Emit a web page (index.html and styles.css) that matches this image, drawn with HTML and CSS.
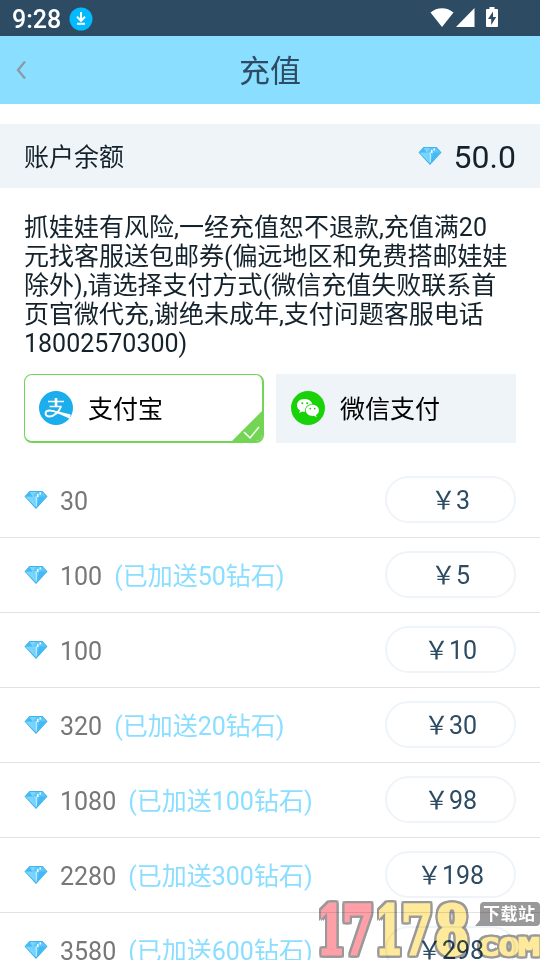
FILE: index.html
```
<!DOCTYPE html>
<html lang="zh-CN">
<head>
<meta charset="utf-8">
<title>充值</title>
<link rel="stylesheet" href="styles.css">
</head>
<body>
<svg class="defs" width="0" height="0">
  <symbol id="gem" viewBox="0 0 24 20">
    <path fill="#36aee8" d="M5.5 1h13L23.5 6.500 12 19 .5 6.500z"/>
    <path fill="#5cc8fa" d="M5.800 1.800h12.400L22.500 6.500 12 17.800 1.500 6.500z"/>
    <path fill="#7cd5fd" d="M5.500 2 8.500 6.500 12 2zM1.500 6.500h7L12 17z"/>
    <path fill="#45b9f4" d="M15.500 6.500h7L12 17.500zM1.500 6.500 5.500 2l3 4.500z"/>
    <path fill="#74d2fd" d="M8.500 6.500h3.500V17.500z"/>
    <path fill="#b4eaff" d="M11.500 6.500H13V15l-1 2.500z"/>
    <path fill="#fff" d="M13 4h1.500v3H13zM15.500 2.500H17v2h-1.500z"/>
  </symbol>
</svg>
<div class="screen">
  <div class="status">
    <span class="time">9:28</span>
    <svg class="download" width="24" height="24" viewBox="0 0 24 24"><circle cx="12" cy="12" r="11.500" fill="#04baff"/><path d="M12 5v8.500M8 9.800l4 4 4-4M8 16.700h8" fill="none" stroke="#fff" stroke-width="2"/></svg>
    <svg class="signals" width="70" height="22" viewBox="0 0 70 22"><path fill="#fff" d="M.5 5.500C7-.2 17-.2 23.500 5.500L12 20zM44.500 1v19H26zM57 2h2.500V0h5v2H67q1 0 1 1v16q0 1-1 1H57q-1 0-1-1V3q0-1 1-1z"/><path fill="#2d4c63" d="M63 4.500 58 12h3.200v6l5-8H63z"/></svg>
  </div>
  <header class="header">
    <svg class="back" width="10" height="20" viewBox="0 0 10 20"><path d="M9 1.500 2 10l7 8.500" fill="none" stroke="#8b9ba6" stroke-width="2.300"/></svg>
    <h1>充值</h1>
  </header>
  <section class="balance">
    <span>账户余额</span>
    <svg class="gem"><use href="#gem"/></svg>
    <b>50.0</b>
  </section>
  <p class="notice">抓娃娃有风险,一经充值恕不退款,充值满20<br>元找客服送包邮券(偏远地区和免费搭邮娃娃<br>除外),请选择支付方式(微信充值失败联系首<br>页官微代充,谢绝未成年,支付问题客服电话<br>18002570300)</p>
  <div class="methods">
    <div class="method selected">
      <svg width="34" height="34" viewBox="0 0 34 34"><circle cx="17" cy="17" r="17" fill="#1cadec"/><path d="M9 10.500h16M10.500 15.500h12" fill="none" stroke="#fff" stroke-width="1.500"/><path d="M17 7v8" stroke="#fff" stroke-width="2.600"/><path d="M22 15.500C20 21 15 25.500 10.500 25.500c-5.500 0-5-6 0-6 3 0 6 1 9 2.500" fill="none" stroke="#fff" stroke-width="1.900"/><path d="M17.500 20 31.800 23.500 30.500 27.500 18 22z" fill="#fff"/></svg>
      <span>支付宝</span>
      <svg class="check" width="32" height="32" viewBox="0 0 32 32"><path d="M32 0v32H0z" fill="#72d553"/><path d="m13 22 6 6 9-11" fill="none" stroke="#fff" stroke-width="1.500"/></svg>
    </div>
    <div class="method wechat">
      <svg width="34" height="34" viewBox="0 0 34 34"><circle cx="17" cy="17" r="17" fill="#1ad20a"/><path fill="#fff" d="M13.500 8C8.500 8 6 11 6 14.200c0 2.300 1.200 4 3 5.100L8.200 22l3-1.600c1 .3 2 .4 3 .3-.8-5 3.300-7.800 7-7.700C20.300 9.700 17.300 8 13.500 8z"/><path fill="#fff" d="M21.500 13.800c-4 0-6.700 2.600-6.700 5.600 0 3.200 3.500 6 8.200 5.400l2.700 1.500-.7-2.400c1.800-1.200 3-2.700 3-4.500 0-3-2.700-5.600-6.500-5.600z"/><g fill="#1ad20a"><circle cx="11.300" cy="12.300" r="1"/><circle cx="16.200" cy="12.300" r="1"/><circle cx="19.300" cy="17.600" r=".9"/><circle cx="23.700" cy="17.600" r=".9"/></g></svg>
      <span>微信支付</span>
    </div>
  </div>
  <ul class="list">
    <li><svg class="gem"><use href="#gem"/></svg><span>30</span><button>￥3</button></li>
    <li><svg class="gem"><use href="#gem"/></svg><span>100</span><em>(已加送50钻石)</em><button>￥5</button></li>
    <li><svg class="gem"><use href="#gem"/></svg><span>100</span><button>￥10</button></li>
    <li><svg class="gem"><use href="#gem"/></svg><span>320</span><em>(已加送20钻石)</em><button>￥30</button></li>
    <li><svg class="gem"><use href="#gem"/></svg><span>1080</span><em>(已加送100钻石)</em><button>￥98</button></li>
    <li><svg class="gem"><use href="#gem"/></svg><span>2280</span><em>(已加送300钻石)</em><button>￥198</button></li>
    <li><svg class="gem"><use href="#gem"/></svg><span>3580</span><em>(已加送600钻石)</em><button>￥298</button></li>
  </ul>
  <svg class="watermark" width="228" height="62" viewBox="312 898 228 62">
    <g class="digits">
      <g class="pink">
        <text x="317" y="954" textLength="28" lengthAdjust="spacingAndGlyphs">1</text>
        <text x="342" y="954" textLength="32" lengthAdjust="spacingAndGlyphs">7</text>
      </g>
      <text x="375" y="954" textLength="28" lengthAdjust="spacingAndGlyphs">1</text>
      <text x="401" y="954" textLength="32" lengthAdjust="spacingAndGlyphs">7</text>
      <text x="435" y="954" textLength="34" lengthAdjust="spacingAndGlyphs">8</text>
    </g>
    <path d="M484 902h52q4 0 4 4v16q0 4-4 4h-61l5-6v-14q0-4 4-4z" fill="#999"/>
    <text class="tag" x="483" y="920" textLength="52">下载站</text>
    <text class="com" x="479" y="955" textLength="60" lengthAdjust="spacingAndGlyphs">COM</text>
  </svg>
</div>
</body>
</html>
```
FILE: styles.css
```
* { box-sizing: border-box; }
body { margin: 0; font-family: Roboto, "Noto Sans CJK SC", sans-serif; font-size: 25px; color: #14222c; }
.defs { position: absolute; }
.screen { position: relative; width: 540px; height: 960px; overflow: hidden; background: #fff; }
.status { display: flex; align-items: center; height: 36px; padding: 0 40px 0 12px; background: #2d4c63; color: #fff; }
.time { font-size: 25px; font-weight: 500; line-height: 36px; padding-top: 3px; width: 56.5px; }
.download { margin-top: 1px; }
.signals { margin-left: auto; margin-top: -1px; overflow: visible; }
.header { display: flex; align-items: center; height: 68px; padding: 0 16px; background: #8adeff; color: #2d4c63; }
.header h1 { flex: 1; margin: 0 10px 0 0; padding-top: 3px; text-align: center; font-size: 31px; font-weight: 400; line-height: 65px; }
.balance { display: flex; align-items: center; height: 64px; margin-top: 20px; padding: 0 24px; background: #eff4f9; }
.balance span { margin-top: -2px; }
.balance .gem { margin: 0 12px 0 auto; }
.balance b { font-size: 32px; font-weight: 400; padding-top: 1px; }
.gem { width: 24px; height: 20px; flex: none; }
.notice { margin: 25px 0 0 24px; line-height: 29px; white-space: nowrap; }
.methods { display: flex; gap: 12px; padding: 0 24px; margin-top: 16px; }
.method { position: relative; display: flex; align-items: center; gap: 15px; width: 240px; height: 69px; padding-left: 15px; background: #eff4f9; color: #000; }
.method span { margin-top: -2px; }
.wechat { padding-bottom: 2px; }
.selected { padding-left: 14px; border: 2px solid #72d553; border-top-width: 1px; border-left-width: 1px; border-radius: 8px; background: #fff; overflow: hidden; }
.check { position: absolute; right: -1px; bottom: -1px; }
.list { margin: 20px 0 0; padding: 0; list-style: none; }
.list li { display: flex; align-items: center; height: 75px; padding: 0 24px; border-bottom: 1px solid #e2e2e2; color: #777; }
.list .gem { margin: -1px 12px 0 0; }
.list span { padding-top: 3px; }
.list em { margin: -2px 0 0 12px; font-style: normal; color: #8adeff; }
.list button { width: 131px; height: 47px; margin: -2px 0 0 auto; padding: 0 0 2px; border: 2px solid #eff4f9; border-radius: 24px; background: none; color: #2d4c63; font: inherit; }
.watermark { position: absolute; left: 312px; top: 898px; mix-blend-mode: multiply; }
.digits text { font: bold 67px "DejaVu Serif", serif; fill: #ffe99b; stroke: #ffe99b; stroke-width: 3px; filter: drop-shadow(2px 0 0 #999) drop-shadow(-2px 0 0 #999) drop-shadow(0 2px 0 #999) drop-shadow(0 -2px 0 #999); }
.digits .pink text { fill: #ff9fa8; stroke: #ff9fa8; }
.tag { font: bold 17px "Noto Sans CJK SC", sans-serif; fill: #fff; }
.com { font: 23px "DejaVu Sans Mono", monospace; fill: #ffe99b; stroke: #ffe99b; stroke-width: 2.5px; filter: drop-shadow(2px 0 0 #999) drop-shadow(-2px 0 0 #999) drop-shadow(0 2px 0 #999) drop-shadow(0 -2px 0 #999); }
```
